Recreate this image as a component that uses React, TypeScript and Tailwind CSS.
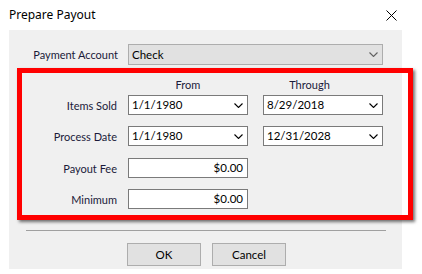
import React from "react";

const font = { fontFamily: 'Lato, "Noto Sans", "Liberation Sans", sans-serif' };

const Chevron = ({ color = "#000" }: { color?: string }) => (
  <svg width="9" height="5" viewBox="0 0 9 5" className="shrink-0">
    <path d="M0.5 0.5 L4.5 4.5 L8.5 0.5" fill="none" stroke={color} strokeWidth="1.1" />
  </svg>
);

const DateSelect = ({ value }: { value: string }) => (
  <div className="w-[120px] h-[20px] bg-white border border-[#7a7a7a] flex items-center justify-between pl-[3px] pr-[4px]">
    <span className="text-[11.5px] leading-none text-black">{value}</span>
    <Chevron />
  </div>
);

const MoneyInput = ({ value }: { value: string }) => (
  <div className="w-[120px] h-[20px] bg-white border border-[#7a7a7a] flex items-center justify-end pr-[4px]">
    <span className="text-[11.5px] leading-none text-black">{value}</span>
  </div>
);

const Label = ({ text }: { text: string }) => (
  <div className="w-[95px] mr-[11px] text-right text-[11px] leading-none text-[#1a1a3a]">
    {text}
  </div>
);

const App: React.FC = () => {
  return (
    <div className="w-[422px] h-[274px] bg-white overflow-hidden" style={font}>
      {/* title bar */}
      <div className="h-[30px] flex items-center justify-between pl-[9px] pr-[25px]">
        <span className="text-[12px] text-black font-['Noto_Sans']">Prepare Payout</span>
        <svg width="11" height="11" viewBox="0 0 11 11">
          <path d="M0.5 0.5 L10.5 10.5 M10.5 0.5 L0.5 10.5" stroke="#000" strokeWidth="1" />
        </svg>
      </div>

      {/* panel */}
      <div className="ml-[9px] w-[393px] h-[239px] bg-[#f0f0f0] flex flex-col pt-[14px]">
        <div className="flex items-center h-[21px]">
          <div className="w-[109px] mr-[10px] text-right text-[11px] leading-none text-[#1a1a3a]">
            Payment Account
          </div>
          <div className="w-[255px] h-[21px] bg-[#e1e1e1] border border-[#adadad] flex items-center justify-between pl-[3px] pr-[4px]">
            <span className="text-[11.5px] leading-none text-black">Check</span>
            <Chevron color="#606060" />
          </div>
        </div>

        {/* highlighted box */}
        <div className="mt-[3px] ml-[8px] w-[396px] h-[152px] shrink-0 border-[5px] border-[#ff0000] shadow-[2px_2px_3px_rgba(0,0,0,0.55)] flex flex-col">
          <div className="h-[22px] flex items-center">
            <div className="w-[106px]" />
            <div className="w-[120px] text-center text-[11px] leading-none text-[#1a1a3a]">From</div>
            <div className="w-[15px]" />
            <div className="w-[93px] text-center text-[11px] leading-none text-[#1a1a3a]">Through</div>
          </div>
          <div className="flex items-center h-[20px]">
            <Label text="Items Sold" />
            <DateSelect value="1/1/1980" />
            <div className="w-[15px]" />
            <DateSelect value="8/29/2018" />
          </div>
          <div className="flex items-center h-[20px] mt-[11px]">
            <Label text="Process Date" />
            <DateSelect value="1/1/1980" />
            <div className="w-[15px]" />
            <DateSelect value="12/31/2028" />
          </div>
          <div className="flex items-center h-[20px] mt-[12px]">
            <Label text="Payout Fee" />
            <MoneyInput value="$0.00" />
          </div>
          <div className="flex items-center h-[20px] mt-[11px]">
            <Label text="Minimum" />
            <MoneyInput value="$0.00" />
          </div>
        </div>

        <div className="mt-[10px] ml-[17px] w-[360px] h-px bg-[#a0a0a0]" />

        <div className="mt-[12px] ml-[118px] flex gap-[11px]">
          <button className="w-[74px] h-[23px] bg-[#e1e1e1] border border-[#adadad] text-[11.5px] leading-none text-black">
            OK
          </button>
          <button className="w-[74px] h-[23px] bg-[#e1e1e1] border border-[#adadad] text-[11.5px] leading-none text-black">
            Cancel
          </button>
        </div>
      </div>
    </div>
  );
};

export default App;
